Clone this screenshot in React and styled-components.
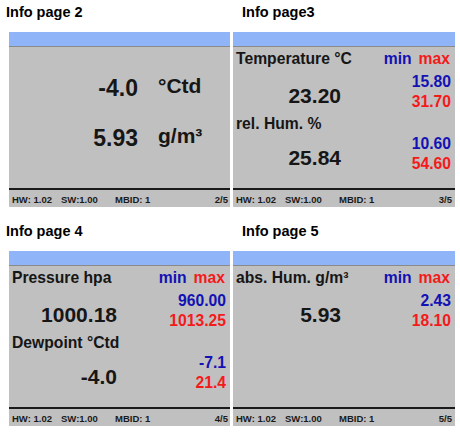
import React from "react";
import styled, { createGlobalStyle } from "styled-components";

const Global = createGlobalStyle`
  html, body { margin: 0; padding: 0; background: #ffffff; }
  body { font-family: "Liberation Sans", Arial, sans-serif; }
`;

const Page = styled.div`
  display: grid;
  grid-template-columns: 224px 222px;
  column-gap: 3px;
  row-gap: 10px;
  padding: 4px 0 0 6px;
  width: 460px;
  height: 432px;
  box-sizing: border-box;
`;

const Cell = styled.section`
  display: flex;
  flex-direction: column;
  gap: 11px;
`;

const Title = styled.h2`
  margin: 0;
  padding-left: ${(p) => (p.$right ? "9px" : "0")};
  font-size: 14.5px;
  line-height: 17px;
  font-weight: 700;
  color: #000;
`;

const Panel = styled.div`
  margin-left: ${(p) => (p.$right ? "0" : "3px")};
  display: flex;
  flex-direction: column;
  background: #c0c0c0;
`;

const TopBar = styled.div`
  height: 14px;
  background: #8fb4f8;
  border-bottom: 1px solid #8a8a8a;
`;

const Body = styled.div`
  height: 141px;
  box-sizing: border-box;
  padding: 2px 4px 0 3px;
  color: #161616;
  font-weight: 700;
`;

const SimpleBody = styled.div`
  height: 141px;
  box-sizing: border-box;
  padding-top: 28px;
  display: grid;
  grid-template-columns: 129px auto;
  column-gap: 20px;
  row-gap: 24px;
  align-content: start;
  color: #161616;
  font-weight: 700;
`;

const BigNumber = styled.div`
  font-size: 23px;
  line-height: 26px;
  text-align: right;
`;

const Unit = styled.div`
  font-size: 21px;
  line-height: 22px;
  align-self: start;
`;

const Section = styled.div`
  margin-top: ${(p) => (p.$first ? "0" : "2px")};
`;

const LabelRow = styled.div`
  display: flex;
  justify-content: space-between;
  align-items: baseline;
  font-size: 15.7px;
  line-height: 20px;
  margin-bottom: ${(p) => (p.$first ? "3px" : "0")};
`;

const Label = styled.span`
  white-space: nowrap;
`;

const Legend = styled.span`
  display: flex;
  gap: 7px;
  padding-right: 1px;
`;

const Tone = styled.span`
  color: ${(p) => (p.$tone === "min" ? "#1212b4" : "#f41a1a")};
`;

const ValueRow = styled.div`
  display: flex;
  align-items: flex-start;
`;

const BigValue = styled.div`
  width: 105px;
  margin-top: 12px;
  text-align: right;
  font-size: 21px;
  line-height: 24px;
`;

const Stack = styled.div`
  flex: 1;
  display: flex;
  flex-direction: column;
  align-items: flex-end;
  font-size: 15.7px;
  line-height: 20px;
`;

const Footer = styled.div`
  height: 19px;
  box-sizing: border-box;
  border-top: 2px solid #1a1a1a;
  padding: 1px ${(p) => (p.$right ? "3px" : "2px")} 0 3px;
  display: flex;
  font-size: 9.5px;
  line-height: 18px;
  font-weight: 700;
  color: #1a1a1a;
  white-space: nowrap;
`;

const FooterItem = styled.span`
  width: ${(p) => p.$w}px;
  flex: none;
`;

const PageNo = styled.span`
  margin-left: auto;
`;

const pages = [
  {
    title: "Info page 2",
    page: "2/5",
    rows: [
      { value: "-4.0", unit: "°Ctd" },
      { value: "5.93", unit: "g/m³" },
    ],
  },
  {
    title: "Info page3",
    page: "3/5",
    sections: [
      { label: "Temperature °C", legend: true, value: "23.20", min: "15.80", max: "31.70" },
      { label: "rel. Hum. %", value: "25.84", min: "10.60", max: "54.60" },
    ],
  },
  {
    title: "Info page 4",
    page: "4/5",
    sections: [
      { label: "Pressure hpa", legend: true, value: "1000.18", min: "960.00", max: "1013.25" },
      { label: "Dewpoint °Ctd", value: "-4.0", min: "-7.1", max: "21.4" },
    ],
  },
  {
    title: "Info page 5",
    page: "5/5",
    sections: [
      { label: "abs. Hum. g/m³", legend: true, value: "5.93", min: "2.43", max: "18.10" },
    ],
  },
];

function InfoPanel({ data, right }) {
  return (
    <Cell>
      <Title $right={right}>{data.title}</Title>
      <Panel $right={right}>
        <TopBar />
        {data.rows ? (
          <SimpleBody>
            {data.rows.map((r) => (
              <React.Fragment key={r.unit}>
                <BigNumber>{r.value}</BigNumber>
                <Unit>{r.unit}</Unit>
              </React.Fragment>
            ))}
          </SimpleBody>
        ) : (
          <Body>
            {data.sections.map((s, i) => (
              <Section key={s.label} $first={i === 0}>
                <LabelRow $first={i === 0}>
                  <Label>{s.label}</Label>
                  {s.legend && (
                    <Legend>
                      <Tone $tone="min">min</Tone>
                      <Tone $tone="max">max</Tone>
                    </Legend>
                  )}
                </LabelRow>
                <ValueRow>
                  <BigValue>{s.value}</BigValue>
                  <Stack>
                    <Tone $tone="min">{s.min}</Tone>
                    <Tone $tone="max">{s.max}</Tone>
                  </Stack>
                </ValueRow>
              </Section>
            ))}
          </Body>
        )}
        <Footer $right={right}>
          <FooterItem $w={49}>HW: 1.02</FooterItem>
          <FooterItem $w={54}>SW:1.00</FooterItem>
          <FooterItem $w={60}>MBID: 1</FooterItem>
          <PageNo>{data.page}</PageNo>
        </Footer>
      </Panel>
    </Cell>
  );
}

export default function App() {
  return (
    <>
      <Global />
      <Page>
        {pages.map((p, i) => (
          <InfoPanel key={p.title} data={p} right={i % 2 === 1} />
        ))}
      </Page>
    </>
  );
}
